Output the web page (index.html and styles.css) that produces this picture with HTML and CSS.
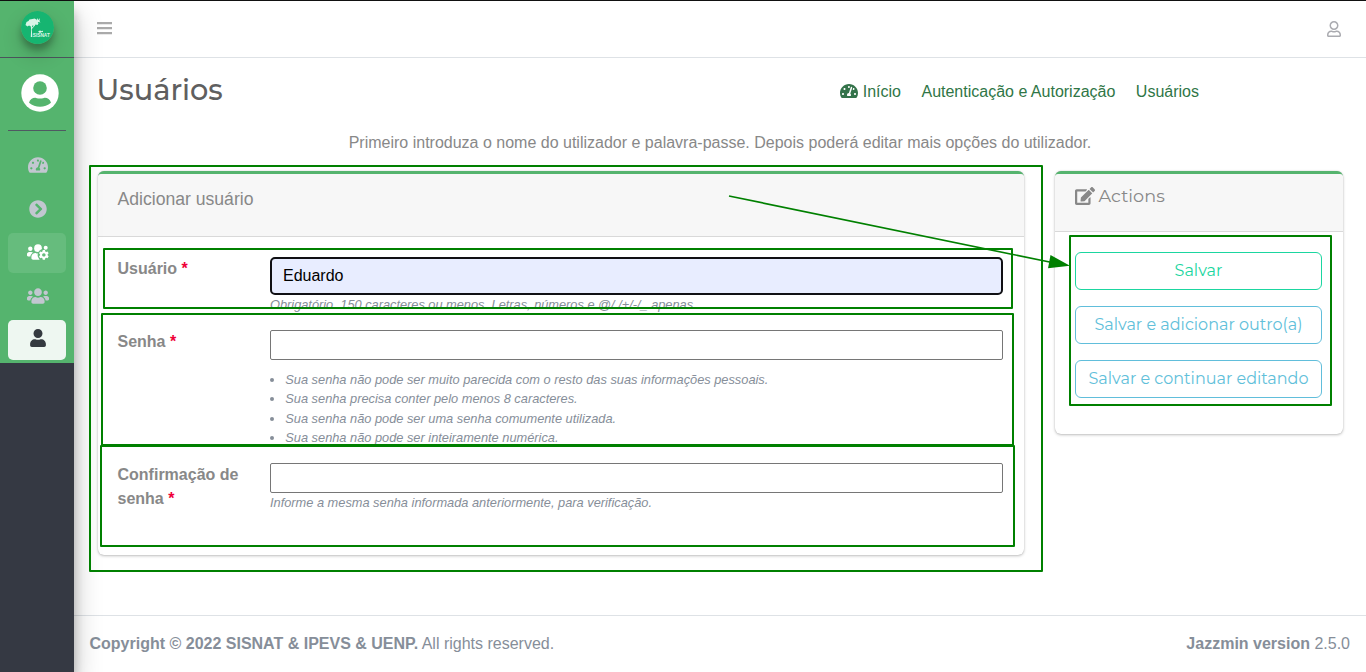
FILE: index.html
```html
<!DOCTYPE html>
<html lang="pt">
<head>
<meta charset="utf-8">
<title>Usuários</title>
<link rel="stylesheet" href="styles.css">
</head>
<body>
<svg class="defs" width="0" height="0">
  <symbol id="gauge" viewBox="0 0 576 512"><path d="M288 32C128.94 32 0 160.94 0 320c0 52.8 14.25 102.26 39.06 144.8 5.61 9.62 16.3 15.2 27.44 15.2h443c11.14 0 21.83-5.58 27.44-15.2C561.75 422.26 576 372.8 576 320c0-159.06-128.94-288-288-288zm0 64c14.71 0 26.58 10.13 30.32 23.65-1.11 2.26-2.64 4.23-3.45 6.67l-9.22 27.67c-5.13 3.49-10.97 6.01-17.64 6.01-17.67 0-32-14.33-32-32S270.33 96 288 96zM96 384c-17.67 0-32-14.33-32-32s14.33-32 32-32 32 14.33 32 32-14.33 32-32 32zm48-160c-17.67 0-32-14.33-32-32s14.33-32 32-32 32 14.33 32 32-14.33 32-32 32zm246.77-72.41l-61.33 184C343.13 347.33 352 364.54 352 384c0 11.72-3.38 22.55-8.88 32H232.88c-5.5-9.45-8.88-20.28-8.88-32 0-33.94 26.5-61.43 59.9-63.59l61.34-184.01c4.17-12.56 17.73-19.45 30.36-15.17 12.57 4.19 19.35 17.79 15.17 30.36zm14.66 57.2l15.52-46.55c3.47-1.29 7.13-2.23 11.05-2.23 17.67 0 32 14.33 32 32s-14.33 32-32 32c-11.38-.01-20.89-6.28-26.57-15.22zM480 384c-17.67 0-32-14.33-32-32s14.33-32 32-32 32 14.33 32 32-14.33 32-32 32z"/></symbol>
</svg>
<div class="app">
  <aside class="sidebar">
    <div class="menu-bg">
      <div class="brand">
        <svg class="logo" viewBox="0 0 33 33">
          <circle cx="16.500" cy="16.500" r="16.500" fill="#16b571"/>
          <g fill="#d8f4e6">
            <path d="M4.500 14l1-3 2-1 1-1.500 3-.5 2-.5 2 1 1 2 1 2-1 1.500-2-.5-1 1.500-2-.5-1.500 1-2-1-1.500 1z"/>
            <path d="M9.700 14h1.400l-.3 4 .5 8H9.800l.3-7zM10.500 17l3-3 .4.500-3 3.500zM16 7l1.500 2 1.500-2-.5 3 1 1.500-2-.5-1.500.5zM17 20.500l2-1 2 .7 1-.7v1.500l-2 .2-1 1-1-1z"/>
          </g>
          <text x="11.800" y="26.300" class="logo-text" textLength="17" lengthAdjust="spacingAndGlyphs">SISNAT</text>
        </svg>
      </div>
      <div class="profile">
        <svg width="38" height="38" viewBox="0 0 38 38"><circle cx="19" cy="19" r="18.700" fill="#fff"/><circle cx="19" cy="14" r="6.800" fill="#55b46e"/><path d="M8 28.700c1-3.600 4-5.200 7-4.800 2.700.8 5.300.8 8 0 3-.4 6 1.200 7 4.800-6.200 5.500-15.800 5.500-22 0z" fill="#55b46e"/></svg>
      </div>
      <nav class="nav">
        <a class="item"><svg width="20" height="18"><use href="#gauge"/></svg></a>
        <a class="item"><svg width="18" height="18" viewBox="0 0 512 512"><path d="M256 8c137 0 248 111 248 248S393 504 256 504 8 393 8 256 119 8 256 8zm113.900 231L234.400 103.500c-9.400-9.400-24.600-9.400-33.900 0l-17 17c-9.400 9.400-9.400 24.600 0 33.900L285.100 256 183.500 357.600c-9.400 9.400-9.400 24.600 0 33.900l17 17c9.400 9.400 24.600 9.400 33.900 0L369.900 273c9.400-9.400 9.400-24.600 0-34z"/></svg></a>
        <a class="item open"><svg width="22" height="18" viewBox="0 0 640 512">
          <mask id="cut"><rect width="640" height="512" fill="#fff"/><circle cx="486" cy="345" r="178" fill="#000"/></mask>
          <g mask="url(#cut)"><circle cx="96" cy="160" r="64"/><circle cx="320" cy="144" r="112"/><path d="M173.100 274.600C161.500 263.100 145.600 256 128 256H64c-35.300 0-64 28.700-64 64v32c0 17.700 14.300 32 32 32h65.900c6.300-47.400 34.900-87.300 75.200-109.400zM396.800 288h-8.300c-40 20-97 20-137 0h-8.300C179.600 288 128 339.600 128 403.200V432c0 26.500 21.500 48 48 48h260V288z"/></g>
          <circle cx="544" cy="130" r="58"/>
          <path fill-rule="evenodd" d="M458 200h64l10 38 26 15 40-12 32 54-30 30v28l30 30-32 54-40-12-26 15-10 42h-64l-10-42-26-15-40 12-32-54 30-30v-28l-30-30 32-54 40 12 26-15zM490 290a50 50 0 1 0 .1 0z"/>
        </svg></a>
        <a class="item"><svg width="22" height="18" viewBox="0 0 640 512"><path d="M96 224c35.300 0 64-28.700 64-64s-28.700-64-64-64-64 28.700-64 64 28.700 64 64 64zm448 0c35.300 0 64-28.700 64-64s-28.700-64-64-64-64 28.700-64 64 28.700 64 64 64zm32 32h-64c-17.600 0-33.500 7.100-45.100 18.600 40.300 22.100 68.900 62 75.100 109.400h66c17.700 0 32-14.300 32-32v-32c0-35.300-28.700-64-64-64zm-256 0c61.900 0 112-50.100 112-112S381.900 32 320 32 208 82.100 208 144s50.100 112 112 112zm76.800 32h-8.300c-20.800 10-43.900 16-68.500 16s-47.600-6-68.500-16h-8.300C179.600 288 128 339.600 128 403.200V432c0 26.500 21.500 48 48 48h288c26.500 0 48-21.500 48-48v-28.800c0-63.600-51.600-115.200-115.200-115.200zm-223.700-13.400C161.500 263.100 145.600 256 128 256H64c-35.300 0-64 28.700-64 64v32c0 17.700 14.300 32 32 32h65.900c6.300-47.400 34.900-87.300 75.200-109.400z"/></svg></a>
        <a class="item active"><svg width="16" height="18" viewBox="0 0 448 512"><path d="M224 256c70.700 0 128-57.300 128-128S294.700 0 224 0 96 57.300 96 128s57.300 128 128 128zm89.600 32h-16.700c-22.200 10.200-46.900 16-72.900 16s-50.600-5.800-72.900-16h-16.700C60.200 288 0 348.200 0 422.400V464c0 26.500 21.500 48 48 48h352c26.500 0 48-21.500 48-48v-41.600c0-74.200-60.200-134.400-134.400-134.400z"/></svg></a>
      </nav>
    </div>
  </aside>

  <div class="page">
    <header class="topbar">
      <svg class="bars" width="15" height="13" viewBox="0 0 15 13" fill="#aaa"><path d="M0 0h15v2.300H0zM0 5h15v2.300H0zM0 10h15v2.300H0z"/></svg>
      <svg width="14" height="16" viewBox="0 0 448 512" fill="#aaabb0"><path d="M313.600 304c-28.700 0-42.500 16-89.600 16-47.100 0-60.800-16-89.600-16C60.200 304 0 364.200 0 438.400V464c0 26.500 21.500 48 48 48h352c26.500 0 48-21.500 48-48v-25.600c0-74.200-60.200-134.400-134.400-134.400zM400 464H48v-25.600c0-47.600 38.800-86.400 86.400-86.400 14.600 0 38.300 16 89.600 16 51.700 0 74.900-16 89.600-16 47.600 0 86.400 38.800 86.400 86.400V464zM224 288c79.500 0 144-64.500 144-144S303.500 0 224 0 80 64.500 80 144s64.500 144 144 144zm0-240c52.900 0 96 43.100 96 96s-43.100 96-96 96-96-43.100-96-96 43.100-96 96-96z"/></svg>
    </header>

    <div class="heading">
      <h1 class="title">Usuários</h1>
      <nav class="crumbs">
        <a class="crumb"><svg width="18" height="16"><use href="#gauge"/></svg>Início</a>
        <a class="crumb">Autenticação e Autorização</a>
        <a class="crumb">Usuários</a>
      </nav>
    </div>
    <p class="intro">Primeiro introduza o nome do utilizador e palavra-passe. Depois poderá editar mais opções do utilizador.</p>

    <main class="columns">
      <section class="card form-card">
        <div class="card-head form-head">Adicionar usuário</div>
        <div class="row row-user">
          <label class="label">Usuário <b class="req">*</b></label>
          <div class="field">
            <input class="input filled" value="Eduardo">
            <div class="help help-user">Obrigatório. 150 caracteres ou menos. Letras, números e @/./+/-/_ apenas.</div>
          </div>
        </div>
        <div class="row row-pass">
          <label class="label">Senha <b class="req">*</b></label>
          <div class="field">
            <input class="input">
            <ul class="help rules">
              <li>Sua senha não pode ser muito parecida com o resto das suas informações pessoais.</li>
              <li>Sua senha precisa conter pelo menos 8 caracteres.</li>
              <li>Sua senha não pode ser uma senha comumente utilizada.</li>
              <li>Sua senha não pode ser inteiramente numérica.</li>
            </ul>
          </div>
        </div>
        <div class="row">
          <label class="label">Confirmação de<br>senha <b class="req">*</b></label>
          <div class="field">
            <input class="input">
            <div class="help">Informe a mesma senha informada anteriormente, para verificação.</div>
          </div>
        </div>
      </section>

      <section class="card side-card">
        <div class="card-head side-head">
          <svg width="20" height="18" viewBox="0 0 576 512" fill="#888"><path d="M402.600 83.200l90.200 90.200c3.800 3.800 3.800 10 0 13.800L274.400 405.600l-92.800 10.300c-12.400 1.400-22.900-9.100-21.500-21.500l10.300-92.800L388.800 83.200c3.800-3.800 10-3.800 13.800 0zm162-22.900l-48.800-48.800c-15.200-15.200-39.900-15.200-55.200 0l-35.400 35.400c-3.800 3.800-3.800 10 0 13.800l90.200 90.200c3.800 3.800 10 3.800 13.800 0l35.400-35.400c15.200-15.300 15.200-40 0-55.200zM384 346.200V448H64V128h229.800c3.200 0 6.200-1.300 8.500-3.500l40-40c7.600-7.600 2.200-20.500-8.500-20.500H48C21.500 64 0 85.500 0 112v352c0 26.500 21.500 48 48 48h352c26.500 0 48-21.500 48-48V306.200c0-10.700-12.900-16-20.500-8.500l-40 40c-2.200 2.300-3.500 5.300-3.500 8.500z"/></svg>
          <span class="actions">Actions</span>
        </div>
        <div class="buttons">
          <button class="btn save">Salvar</button>
          <button class="btn">Salvar e adicionar outro(a)</button>
          <button class="btn">Salvar e continuar editando</button>
        </div>
      </section>
    </main>

    <footer class="footer">
      <span><b>Copyright © 2022 SISNAT &amp; IPEVS &amp; UENP.</b> All rights reserved.</span>
      <span><b>Jazzmin version</b> 2.5.0</span>
    </footer>
  </div>
</div>
<svg class="notes" width="1366" height="672" viewBox="0 0 1366 672" fill="none" stroke="#008000" stroke-width="2" stroke-linejoin="round">
  <rect x="90" y="166" width="952" height="405"/>
  <rect x="104" y="249" width="908" height="59"/>
  <rect x="102" y="314" width="911" height="131"/>
  <rect x="101" y="446" width="913" height="100"/>
  <rect x="1070" y="236" width="261" height="169"/>
  <path d="M729 196L1052 262.500" stroke-width="1.700"/>
  <path d="M1050.500 255l19.500 10.800-22 2.400z" fill="#008000" stroke="none"/>
</svg>
</body>
</html>
```
FILE: styles.css
```css
* { box-sizing: border-box; }
body {
  margin: 0;
  height: 672px;
  overflow: hidden;
  background: #fff;
  color: #888;
  font: 16px/24px "Liberation Sans", Arial, sans-serif;
}
.defs { position: absolute; }
svg { display: block; flex: none; }
.app { display: flex; height: 672px; border-top: 1px solid #111; }

.sidebar {
  width: 74px;
  flex: none;
  position: relative;
  z-index: 2;
  background: #353943;
  box-shadow: 0 14px 28px rgba(0,0,0,.25), 0 10px 10px rgba(0,0,0,.22);
}
.menu-bg { height: 362px; background: #55b46e; }
.brand { height: 57px; padding: 10px 0 0 21px; border-bottom: 1px solid #4b545c; }
.logo { width: 33px; height: 33px; border-radius: 50%; box-shadow: 0 10px 20px rgba(0,0,0,.19), 0 6px 6px rgba(0,0,0,.23); }
.logo-text { font: bold 5px "Liberation Sans", Arial, sans-serif; fill: #d8f4e6; }
.profile { height: 73px; margin: 0 8px; padding: 15.500px 0 0 12.500px; border-bottom: 1px solid #4f5962; }
.nav { display: flex; flex-direction: column; gap: 3.500px; padding: 15px 8px 0; }
.item { height: 40px; display: flex; align-items: center; justify-content: center; border-radius: 5px; fill: #c2c7d0; }
.item svg { margin-left: 1px; margin-bottom: 2px; }
.item.active svg { margin-bottom: 4px; }
.open { background: #66bc7d; fill: #fff; }
.active { background: #eef7f1; fill: #343a40; }

.page { flex: 1; display: flex; flex-direction: column; min-width: 0; }
.topbar { height: 57px; display: flex; justify-content: space-between; align-items: center; padding: 0 25px 0 23px; border-bottom: 1px solid #dee2e6; }
.bars { margin-bottom: 1px; }
.heading { display: flex; height: 65px; padding: 14px 167px 0 22.500px; justify-content: space-between; }
.title { margin: 0; font: 500 28.800px/36px Montserrat, Inter, sans-serif; color: #5f5f5f; }
.crumbs { display: flex; gap: 20.500px; padding-top: 8px; color: #2f7646; }
.crumb { display: flex; gap: 5px; white-space: nowrap; }
.crumb svg { margin-top: 3px; fill: #34734a; }
.intro { margin: 8px 0 0; text-align: center; }

.columns { display: flex; align-items: flex-start; gap: 30.500px; margin: 16px 22.500px 0 23.500px; }
.card { border-top: 3px solid #55b46e; border-radius: 6px; box-shadow: 0 0 1px rgba(0,0,0,.2), 0 1px 3px rgba(0,0,0,.25); background: #fff; }
.card-head { background: #f7f7f7; border-bottom: 1px solid #d9d9d9; border-radius: 3px 3px 0 0; }
.form-card { width: 926px; height: 384px; }
.form-head { height: 63px; padding: 13px 20px; font-size: 17.600px; line-height: 24px; margin-bottom: 20px; }
.row { display: flex; padding: 0 20px; }
.row-user { height: 73px; }
.row-pass { height: 133px; }
.label { width: 152.500px; font-weight: bold; }
.req { color: #ef0038; }
.field { flex: 1; }
.input { display: block; width: 733px; height: 30px; margin: 0; border: 1px solid #767676; border-radius: 2px; font: 16px "Liberation Sans", Arial, sans-serif; color: #000; background: #fff; }
.filled { height: 38px; border: 2px solid #101014; border-radius: 5px; background: #e8edff; padding: 0 11px; outline: 0; }
.help { font-size: 12.800px; line-height: 19.300px; font-style: italic; color: #868e99; white-space: nowrap; }
.help-user { letter-spacing: -.01px; }
.rules { margin: 10px 0 0; padding-left: 15.300px; }

.side-card { width: 288px; height: 263px; margin-left: .5px; }
.side-head { height: 58px; display: flex; gap: 4px; padding: 13px 20px; }
.actions, .btn { font-family: Montserrat, Inter, sans-serif; font-weight: 400; }
.actions { font-size: 17.600px; line-height: 18px; letter-spacing: .05px; }
.buttons { display: flex; flex-direction: column; gap: 16px; padding: 20px 20.500px; }
.btn { height: 38px; padding: 0 0 2px; border: 1px solid #61bedb; border-radius: 6px; background: #fff; color: #61c0da; font-size: 16px; white-space: nowrap; }
.save { border-color: #1bd6a0; color: #1bd6a0; }

.footer { margin-top: auto; height: 57px; display: flex; justify-content: space-between; padding: 16px 16px 0 15.500px; border-top: 1px solid #dee2e6; color: #868e99; }
.notes { position: absolute; left: 0; top: 0; z-index: 5; pointer-events: none; }
```
